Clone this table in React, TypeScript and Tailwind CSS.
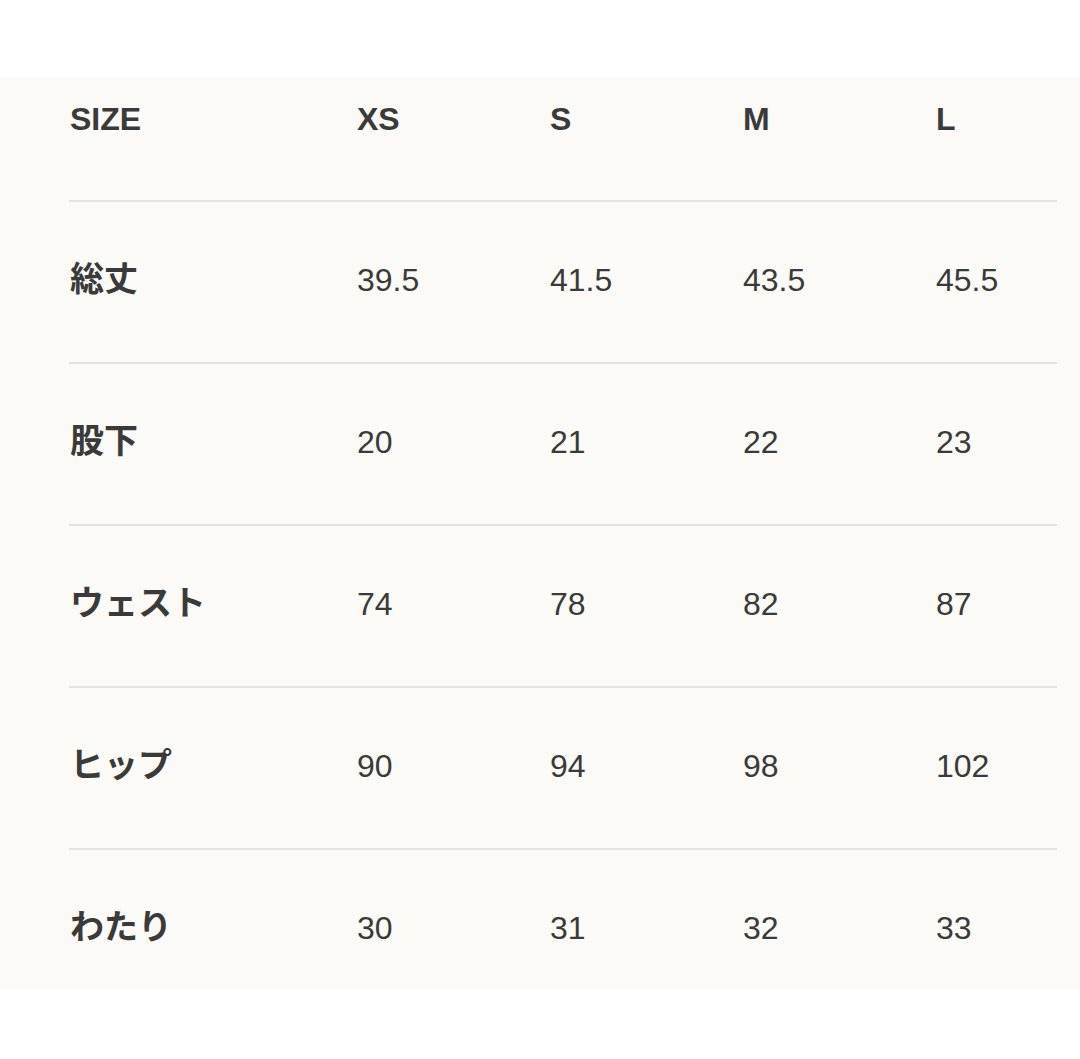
const HEAD = ["SIZE", "XS", "S", "M", "L"];

const ROWS: [string, string[]][] = [
  ["総丈", ["39.5", "41.5", "43.5", "45.5"]],
  ["股下", ["20", "21", "22", "23"]],
  ["ウェスト", ["74", "78", "82", "87"]],
  ["ヒップ", ["90", "94", "98", "102"]],
  ["わたり", ["30", "31", "32", "33"]],
];

const grid = "grid grid-cols-[287px_193px_193px_193px_1fr]";

export default function App() {
  return (
    <div className="min-h-[1059px] bg-white pt-[77px] font-['Liberation_Sans','Noto_Sans_CJK_JP',sans-serif] text-[#3a3a3a]">
      <div className="bg-[#fbfaf6] pl-[70px] pr-[23px]">
        <div className={`${grid} h-[123px] pt-[22px] text-[32px] font-bold leading-[40px]`}>
          {HEAD.map((h) => (
            <div key={h}>{h}</div>
          ))}
        </div>
        {ROWS.map(([label, vals], i) => (
          <div
            key={label}
            className={`-ml-[1px] ${grid} border-t-2 border-[#e4e2dd] pl-[1px] pt-[58px] text-[32px] leading-[40px] ${
              i === ROWS.length - 1 ? "pb-[41px]" : "pb-[62px]"
            }`}
          >
            <div className="-mt-[3px] font-['Noto_Sans_CJK_JP',sans-serif] text-[34px] font-bold">{label}</div>
            {vals.map((v, j) => (
              <div key={j}>{v}</div>
            ))}
          </div>
        ))}
      </div>
    </div>
  );
}
